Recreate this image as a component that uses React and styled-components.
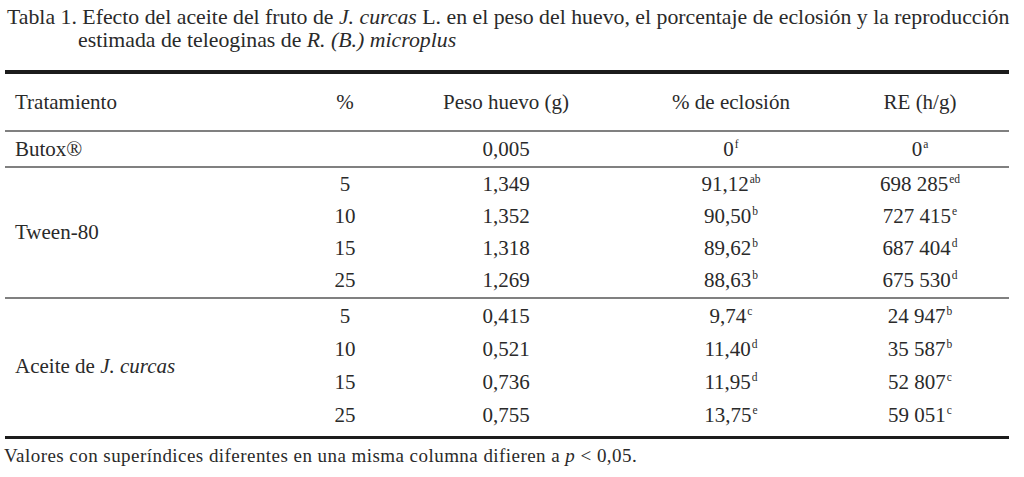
import React from "react";
import styled, { createGlobalStyle, css } from "styled-components";

const serif = css`
  font-family: "Liberation Serif", "Times New Roman", Times, serif;
`;

const Global = createGlobalStyle`
  html, body { margin: 0; padding: 0; background: #ffffff; }
  body { font-family: "Liberation Serif", "Times New Roman", Times, serif; color: #2a2a2a; }
`;

const Page = styled.div`
  ${serif};
  width: 1024px;
  height: 477px;
  overflow: hidden;
  background: #fff;
  color: #2a2a2a;
`;

const Caption = styled.p`
  ${serif};
  margin: 0;
  padding: 6px 2px 0 78px;
  text-indent: -71px;
  font-size: 21.8px;
  line-height: 23px;
  color: #2a2a2a;
`;

const Em = styled.i`
  ${serif};
  font-style: italic;
`;

const Table = styled.div`
  ${serif};
  margin: 18px 15px 0 5px;
  border-top: 4px solid #1c1c1c;
  border-bottom: 3px solid #1c1c1c;
`;

const cols = "260px 160px 162px 288px 1fr";

const HeadRow = styled.div`
  ${serif};
  display: grid;
  grid-template-columns: ${cols};
  height: 56px;
  align-items: center;
  border-bottom: 2px solid #808080;
  font-size: 21px;
`;

const Row = styled.div`
  ${serif};
  display: grid;
  grid-template-columns: ${cols};
  height: ${(p) => p.$h}px;
  align-items: center;
  border-bottom: 2px solid #808080;
  font-size: 21px;
`;

const Group = styled.div`
  ${serif};
  display: grid;
  grid-template-columns: ${cols};
  grid-template-rows: repeat(4, ${(p) => p.$rowH}px);
  padding-top: ${(p) => p.$pt}px;
  padding-bottom: ${(p) => p.$pb}px;
  align-items: center;
  border-bottom: ${(p) => (p.$last ? "none" : "2px solid #808080")};
  font-size: 21px;
`;

const NameCell = styled.div`
  ${serif};
  padding-left: 10px;
  white-space: nowrap;
  ${(p) => p.$span && "grid-row: 1 / -1; grid-column: 1; align-self: center;"}
`;

const Cell = styled.div`
  ${serif};
  text-align: center;
  white-space: nowrap;
  padding-right: ${(p) => (p.$last ? 44 : 0)}px;
  grid-column: ${(p) => p.$col};
`;

const Sup = styled.sup`
  ${serif};
  font-size: 11.5px;
  vertical-align: 0;
  position: relative;
  top: -8px;
  margin-left: 1px;
`;

const Footnote = styled.p`
  ${serif};
  margin: 0;
  padding: 6px 0 0 4px;
  font-size: 19px;
  letter-spacing: 0.45px;
  line-height: 22px;
  color: #2a2a2a;
`;

const Val = ({ v, s }) => (
  <>
    {v}
    {s && <Sup>{s}</Sup>}
  </>
);

const tween = [
  ["5", "1,349", ["91,12", "ab"], ["698 285", "ed"]],
  ["10", "1,352", ["90,50", "b"], ["727 415", "e"]],
  ["15", "1,318", ["89,62", "b"], ["687 404", "d"]],
  ["25", "1,269", ["88,63", "b"], ["675 530", "d"]],
];

const aceite = [
  ["5", "0,415", ["9,74", "c"], ["24 947", "b"]],
  ["10", "0,521", ["11,40", "d"], ["35 587", "b"]],
  ["15", "0,736", ["11,95", "d"], ["52 807", "c"]],
  ["25", "0,755", ["13,75", "e"], ["59 051", "c"]],
];

const GroupRows = ({ rows }) =>
  rows.map((r, i) => (
    <React.Fragment key={i}>
      <Cell $col={2} style={{ gridRow: i + 1 }}>{r[0]}</Cell>
      <Cell $col={3} style={{ gridRow: i + 1 }}>{r[1]}</Cell>
      <Cell $col={4} style={{ gridRow: i + 1 }}>
        <Val v={r[2][0]} s={r[2][1]} />
      </Cell>
      <Cell $col={5} $last style={{ gridRow: i + 1 }}>
        <Val v={r[3][0]} s={r[3][1]} />
      </Cell>
    </React.Fragment>
  ));

export default function App() {
  return (
    <Page>
      <Global />
      <Caption>
        Tabla 1. Efecto del aceite del fruto de <Em>J. curcas</Em> L. en el peso del huevo, el porcentaje de eclosión y la reproducción estimada de teleoginas de <Em>R. (B.) microplus</Em>
      </Caption>
      <Table>
        <HeadRow>
          <NameCell>Tratamiento</NameCell>
          <Cell $col={2}>%</Cell>
          <Cell $col={3}>Peso huevo (g)</Cell>
          <Cell $col={4}>% de eclosión</Cell>
          <Cell $col={5} $last>RE (h/g)</Cell>
        </HeadRow>
        <Row $h={34}>
          <NameCell>Butox®</NameCell>
          <Cell $col={2}></Cell>
          <Cell $col={3}>0,005</Cell>
          <Cell $col={4}><Val v="0" s="f" /></Cell>
          <Cell $col={5} $last><Val v="0" s="a" /></Cell>
        </Row>
        <Group $rowH={32} $pt={0} $pb={1}>
          <NameCell $span>Tween-80</NameCell>
          <GroupRows rows={tween} />
        </Group>
        <Group $rowH={33} $pt={1} $pb={4} $last>
          <NameCell $span>
            Aceite de <Em>J. curcas</Em>
          </NameCell>
          <GroupRows rows={aceite} />
        </Group>
      </Table>
      <Footnote>
        Valores con superíndices diferentes en una misma columna difieren a <Em>p</Em> &lt; 0,05.
      </Footnote>
    </Page>
  );
}
